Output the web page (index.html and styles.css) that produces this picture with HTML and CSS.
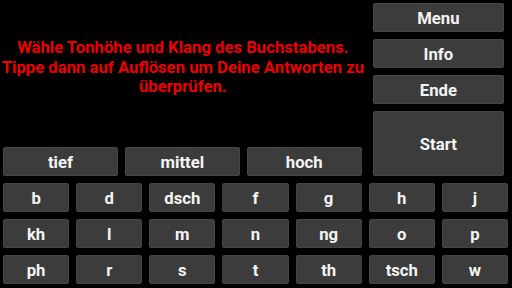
FILE: index.html
```html
<!DOCTYPE html>
<html lang="de">
<head>
<meta charset="utf-8">
<link rel="stylesheet" href="styles.css">
</head>
<body>
<div class="app">
  <div class="message">
    <p>Wähle Tonhöhe und Klang des Buchstabens.<br>Tippe dann auf Auflösen um Deine Antworten zu<br>überprüfen.</p>
  </div>
  <div class="side">
    <div class="cell side-cell"><button class="btn">Menu</button></div>
    <div class="cell side-cell"><button class="btn">Info</button></div>
    <div class="cell side-cell"><button class="btn">Ende</button></div>
    <div class="cell side-cell start-cell"><button class="btn">Start</button></div>
  </div>
  <div class="tones">
    <div class="cell"><button class="btn">tief</button></div>
    <div class="cell"><button class="btn">mittel</button></div>
    <div class="cell"><button class="btn">hoch</button></div>
  </div>
  <div class="letters">
    <div class="cell"><button class="btn">b</button></div>
    <div class="cell"><button class="btn">d</button></div>
    <div class="cell"><button class="btn">dsch</button></div>
    <div class="cell"><button class="btn">f</button></div>
    <div class="cell"><button class="btn">g</button></div>
    <div class="cell"><button class="btn">h</button></div>
    <div class="cell"><button class="btn">j</button></div>
    <div class="cell"><button class="btn">kh</button></div>
    <div class="cell"><button class="btn">l</button></div>
    <div class="cell"><button class="btn">m</button></div>
    <div class="cell"><button class="btn">n</button></div>
    <div class="cell"><button class="btn">ng</button></div>
    <div class="cell"><button class="btn">o</button></div>
    <div class="cell"><button class="btn">p</button></div>
    <div class="cell"><button class="btn">ph</button></div>
    <div class="cell"><button class="btn">r</button></div>
    <div class="cell"><button class="btn">s</button></div>
    <div class="cell"><button class="btn">t</button></div>
    <div class="cell"><button class="btn">th</button></div>
    <div class="cell"><button class="btn">tsch</button></div>
    <div class="cell"><button class="btn">w</button></div>
  </div>
</div>
</body>
</html>
```
FILE: styles.css
```css
html, body {
  margin: 0;
  padding: 0;
  background: #000;
}
body {
  width: 512px;
  height: 288px;
  overflow: hidden;
  font-family: Roboto, "Liberation Sans", sans-serif;
}
.app {
  display: grid;
  grid-template-columns: 5fr 2fr;
  grid-template-rows: 144px 36px 108px;
  width: 512px;
  height: 288px;
}
.message {
  grid-column: 1;
  grid-row: 1;
  padding-top: 38px;
  box-sizing: border-box;
}
.message p {
  margin: 0;
  color: #ee0000;
  font-weight: bold;
  font-size: 16.7px;
  line-height: 19.5px;
  text-align: center;
  white-space: nowrap;
}
.side {
  grid-column: 2;
  grid-row: 1 / 3;
  display: grid;
  grid-template-rows: 36px 36px 36px 72px;
}
.tones {
  grid-column: 1;
  grid-row: 2;
  display: grid;
  grid-template-columns: repeat(3, 1fr);
}
.letters {
  grid-column: 1 / -1;
  grid-row: 3;
  display: grid;
  grid-template-columns: repeat(7, 1fr);
  grid-template-rows: repeat(3, 36px);
}
.cell {
  display: flex;
  padding: 3px 4px 4px 3px;
  box-sizing: border-box;
  min-width: 0;
}
.side-cell {
  padding: 3px 8px 4px 7px;
}
.btn {
  flex: 1;
  margin: 0;
  padding: 4px 0 0;
  min-width: 0;
  background: #3c3c3c;
  border: 1px solid #454545;
  border-radius: 2px;
  color: #f4f4f4;
  font-family: Roboto, "Liberation Sans", sans-serif;
  font-weight: bold;
  font-size: 16.7px;
  line-height: 1;
  text-align: center;
}
```
